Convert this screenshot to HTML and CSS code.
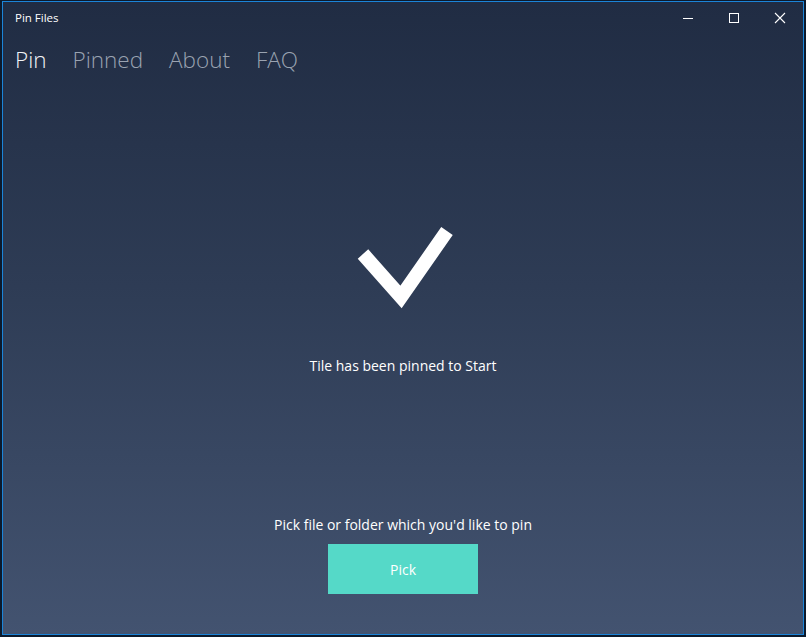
FILE: index.html
```html
<!DOCTYPE html>
<html lang="en">
<head>
    <meta charset="UTF-8">
    <title>Pin Files</title>
    <link rel="stylesheet" href="styles.css">
</head>
<body>
    <div class="window">
        <div class="titlebar">
            <span class="title">Pin Files</span>
            <div class="controls">
                <div class="ctrl">
                    <svg width="12" height="12" viewBox="0 0 12 12"><path d="M1 6.5h10" stroke="#fff" stroke-width="1"/></svg>
                </div>
                <div class="ctrl">
                    <svg width="12" height="12" viewBox="0 0 12 12"><rect x="1.5" y="1.5" width="9" height="9" fill="none" stroke="#fff" stroke-width="1"/></svg>
                </div>
                <div class="ctrl">
                    <svg width="12" height="12" viewBox="0 0 12 12"><path d="M1 1l10 10M11 1L1 11" stroke="#fff" stroke-width="1.1"/></svg>
                </div>
            </div>
        </div>
        <nav class="tabs">
            <span class="tab active">Pin</span>
            <span class="tab">Pinned</span>
            <span class="tab">About</span>
            <span class="tab">FAQ</span>
        </nav>
        <div class="content">
            <svg class="check" width="100" height="88" viewBox="0 0 100 88">
                <path d="M8 33 L46 76 L92 10" fill="none" stroke="#fff" stroke-width="14" stroke-linejoin="miter" stroke-miterlimit="10"/>
            </svg>
            <p class="status">Tile has been pinned to Start</p>
            <p class="hint">Pick file or folder which you'd like to pin</p>
            <button class="pick">Pick</button>
        </div>
    </div>
</body>
</html>
```

FILE: styles.css
```css
html, body {
    margin: 0;
    height: 100%;
}

body {
    background-color: #0c1a2c;
    font-family: "Open Sans", "Noto Sans", sans-serif;
    color: #ffffff;
    padding: 1px 2px 0 2px;
    box-sizing: border-box;
}

.window {
    width: 802px;
    height: 634px;
    box-sizing: border-box;
    border: 1px solid #1b84d8;
    background: linear-gradient(to bottom, #202c43 0%, #2e3c55 45%, #435370 100%);
    display: flex;
    flex-direction: column;
}

.titlebar {
    height: 31px;
    display: flex;
    align-items: center;
    justify-content: space-between;
}

.title {
    font-size: 11.5px;
    padding-left: 12px;
    margin-top: -1px;
}

.controls {
    display: flex;
    align-self: stretch;
}

.ctrl {
    width: 46px;
    display: flex;
    align-items: center;
    justify-content: center;
}

.tabs {
    display: flex;
    gap: 26px;
    padding-left: 12px;
    margin-top: 11px;
}

.tab {
    font-size: 22.5px;
    font-weight: 300;
    color: #9aa3b1;
}

.tab.active {
    color: #f2f4f7;
}

.content {
    display: flex;
    flex-direction: column;
    align-items: center;
}

.check {
    margin-top: 146px;
    margin-left: 4px;
}

.status {
    font-size: 14px;
    margin: 47px 0 0 0;
}

.hint {
    font-size: 14px;
    margin: 140px 0 0 0;
}

.pick {
    margin-top: 10px;
    width: 150px;
    height: 50px;
    border: none;
    background-color: #55d9c8;
    color: #ffffff;
    font-family: "Open Sans", "Noto Sans", sans-serif;
    font-size: 14px;
}
```
